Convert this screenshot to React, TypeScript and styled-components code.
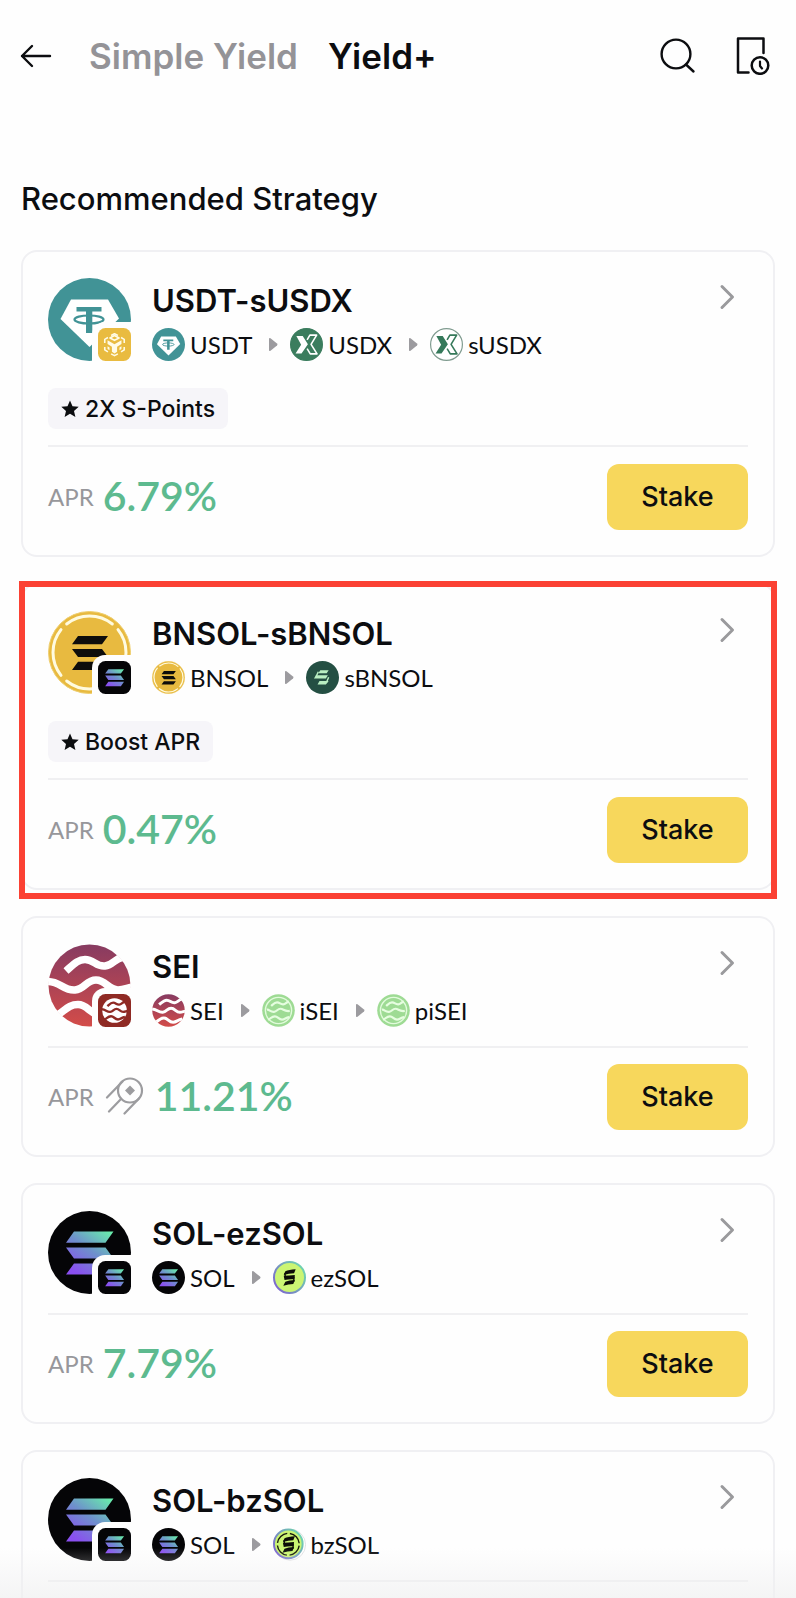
import React, { useId } from 'react';
import styled, { createGlobalStyle } from 'styled-components';

const GlobalStyle = createGlobalStyle`
  *, *::before, *::after { box-sizing: border-box; }
  html, body { margin: 0; background: #fefefe; }
  button { margin: 0; padding: 0; border: 0; background: none; color: inherit; font: inherit; cursor: pointer; }
`;

const HEADING_FONT = "Inter, 'Open Sans', sans-serif";
const TEXT_FONT = "Lato, 'Open Sans', sans-serif";

/* ---------- layout ---------- */

const Screen = styled.div`
  position: relative;
  height: 100vh;
  overflow: hidden;
  display: flex;
  flex-direction: column;
  background: #fefefe;
  color: #0c0d10;
  font-family: ${TEXT_FONT};
`;

const TopBar = styled.header`
  flex: none;
  display: flex;
  align-items: center;
  height: 112px;
  padding: 0 26px 0 20px;
`;

const IconButton = styled.button`
  display: flex;
  flex: none;
`;

const Tabs = styled.nav`
  flex: 1;
  display: flex;
  gap: 30px;
  margin-left: 37px;
`;

const Tab = styled.button<{ $active?: boolean }>`
  font-family: ${HEADING_FONT};
  font-size: 35px;
  line-height: 44px;
  font-weight: 600;
  white-space: nowrap;
  color: ${(p) => (p.$active ? '#0c0d10' : '#949397')};
`;

const Actions = styled.div`
  display: flex;
  align-items: center;
  gap: 40px;
`;

const Content = styled.main`
  flex: 1;
  min-height: 0;
  overflow-y: auto;
  scrollbar-width: none;
  padding: 67px 21px 0;
`;

const SectionTitle = styled.h1`
  margin: 0 0 31px;
  font-family: ${HEADING_FONT};
  font-size: 31px;
  line-height: 40px;
  font-weight: 500;
`;

const CardList = styled.div`
  display: flex;
  flex-direction: column;
  gap: 26px;
`;

const Card = styled.article`
  position: relative;
  padding: 26px 25px 25px;
  border: 2px solid #f0f0f3;
  border-radius: 16px;
`;

const Highlight = styled.div`
  position: absolute;
  inset: -4px -4px -11px;
  border: 6px solid #fb4133;
  pointer-events: none;
`;

const CardHead = styled.div`
  display: flex;
  align-items: flex-start;
`;

const AssetMark = styled.div`
  position: relative;
  flex: none;
  display: flex;
  width: 83px;
  height: 83px;
  overflow: hidden;
`;

const NetworkBadge = styled.div`
  position: absolute;
  right: 0;
  bottom: 0;
  display: flex;
  padding: 6px 0 0 6px;
  border-radius: 13px 0 0 0;
  background: #fefefe;
`;

const CardInfo = styled.div`
  flex: 1;
  min-width: 0;
  margin-left: 21px;
`;

const CardTitle = styled.h2`
  margin: 0 0 4px;
  font-family: ${HEADING_FONT};
  font-size: 31px;
  line-height: 46px;
  font-weight: 600;
`;

const Route = styled.div`
  display: flex;
  align-items: center;
  height: 33px;
`;

const Token = styled.span`
  display: flex;
  align-items: center;
  gap: 5px;
  font-size: 24px;
  line-height: 32px;
  white-space: nowrap;
`;

const StepArrow = styled.svg`
  flex: none;
  margin: 0 12px 0 16px;
`;

const OpenButton = styled(IconButton)`
  margin: 5px 12px 0 0;
`;

const TagRow = styled.div`
  display: flex;
  margin-top: 27px;
`;

const Tag = styled.span`
  display: flex;
  align-items: center;
  gap: 6px;
  height: 41px;
  padding: 0 13px;
  border-radius: 8px;
  background: #f6f5f9;
  font-family: ${HEADING_FONT};
  font-size: 23px;
  font-weight: 500;
  white-space: nowrap;
`;

const CardFoot = styled.div<{ $tagged?: boolean }>`
  display: flex;
  align-items: center;
  justify-content: space-between;
  margin-top: ${(p) => (p.$tagged ? 16 : 19)}px;
  padding-top: ${(p) => (p.$tagged ? 17 : 16)}px;
  border-top: 2px solid #f0f0f2;
`;

const Rate = styled.div`
  display: flex;
  align-items: center;
  gap: 9px;
  padding-bottom: 2px;
`;

const RateLabel = styled.span`
  font-size: 24px;
  color: #97979b;
`;

const RateValue = styled.span`
  font-size: 41px;
  line-height: 48px;
  font-weight: 600;
  color: #5dba8f;
`;

const StakeButton = styled.button`
  width: 141px;
  height: 66px;
  margin-left: auto;
  padding-bottom: 2px;
  border-radius: 12px;
  background: #f7d75c;
  font-family: ${HEADING_FONT};
  font-size: 27px;
  font-weight: 500;
  color: #0c0d10;
`;

const BottomFade = styled.div`
  position: absolute;
  left: 0;
  right: 0;
  bottom: 0;
  height: 50px;
  background: linear-gradient(rgba(240, 240, 241, 0), rgba(240, 240, 241, 0.7));
  pointer-events: none;
`;

/* ---------- interface icons ---------- */

const BackIcon = () => (
  <svg width="32" height="24" viewBox="0 0 32 24" fill="none" stroke="#0c0d10" strokeWidth="2.4" strokeLinecap="round" strokeLinejoin="round">
    <path d="M12 2 2 12 12 22M2 12H30" />
  </svg>
);

const SearchIcon = () => (
  <svg width="36" height="38" viewBox="0 0 36 38" fill="none" stroke="#0c0d10" strokeWidth="2.4" strokeLinecap="round">
    <circle cx="16" cy="17" r="14.4" />
    <path d="M26 27.500 33.500 34.500" />
  </svg>
);

const HistoryIcon = () => (
  <svg width="34" height="38" viewBox="0 0 34 38" fill="none" stroke="#0c0d10" strokeWidth="2.5" strokeLinecap="round" strokeLinejoin="round">
    <path d="M12.500 35.500H2V1.500H27.500V16" />
    <circle cx="24" cy="28.500" r="8.300" />
    <path d="M24 24.500V29L26 31.500" strokeWidth="2.200" />
  </svg>
);

const ChevronIcon = () => (
  <svg width="17" height="28" viewBox="0 0 17 28" fill="none" stroke="#9a9a9d" strokeWidth="3" strokeLinecap="round" strokeLinejoin="round">
    <path d="M3 3.500 13.500 14 3 24.500" />
  </svg>
);

const Arrow = () => (
  <StepArrow width="10" height="15" viewBox="0 0 10 15" aria-hidden="true">
    <path d="M1 2Q1 0.500 2.500 1.300L9 6.500Q10 7.500 9 8.500L2.500 13.700Q1 14.500 1 13Z" fill="#9c9b9f" />
  </StepArrow>
);

const StarIcon = () => (
  <svg width="18" height="18" viewBox="0 0 18 18" aria-hidden="true">
    <path d="M9 0.500 11.500 6.200 17.700 6.800 13 10.900 14.400 17 9 13.800 3.600 17 5 10.900 0.300 6.800 6.500 6.200Z" fill="#0c0d10" />
  </svg>
);

const CometIcon = () => (
  <svg width="43" height="38" viewBox="-2 0 43 38" fill="none" stroke="#9c9c9f" strokeWidth="2.200" strokeLinecap="round" aria-hidden="true">
    <circle cx="25" cy="13.500" r="12" />
    <path d="M25 8.500 30 13.500 25 18.500 20 13.500Z" fill="#9c9c9f" stroke="none" />
    <path d="M17.500 4.500 2 20.500M16 22 4 34.500M34 21.500 19.500 36.500" />
  </svg>
);

/* ---------- token marks, all drawn on an 83-unit square ---------- */

type MarkProps = { size: number };

const Mark = ({ size, children }: MarkProps & { children: React.ReactNode }) => (
  <svg width={size} height={size} viewBox="0 0 83 83" aria-hidden="true">
    {children}
  </svg>
);

const UsdtMark = ({ size }: MarkProps) => (
  <Mark size={size}>
    <circle cx="41.5" cy="41.5" r="41.500" fill="#419396" />
    <path d="M23 21.500H60L71 40.500 41.500 69 12.500 41Z" fill="#fff" />
    <path d="M28.500 29H53.500V33.500H44.300V55H38V33.500H28.500Z" fill="#419396" />
    <ellipse cx="41" cy="41.500" rx="14.500" ry="4" fill="none" stroke="#419396" strokeWidth="2.200" />
  </Mark>
);

const BARS = 'M26 20.500H65.500L57.500 31.700H18ZM18 36.500H57.500L65.500 47.600H26ZM26 52.500H65.500L57.500 63.500H18Z';

const SolMark = ({ size, square }: MarkProps & { square?: boolean }) => {
  const id = useId();
  return (
    <Mark size={size}>
      <linearGradient id={id} gradientUnits="userSpaceOnUse" x1="24" y1="66" x2="58" y2="18">
        <stop offset="0.100" stopColor="#8a4ff0" />
        <stop offset="0.550" stopColor="#6e90cc" />
        <stop offset="1" stopColor="#68ecab" />
      </linearGradient>
      {square ? <rect width="83" height="83" rx="19" fill="#050507" /> : <circle cx="41.500" cy="41.500" r="41.500" fill="#050507" />}
      <path d={BARS} fill={`url(#${id})`} />
    </Mark>
  );
};

const BnsolMark = ({ size }: MarkProps) => (
  <Mark size={size}>
    <circle cx="41.500" cy="41.500" r="41" fill="#e8ba40" stroke="#efcf70" />
    <circle cx="41.500" cy="41.500" r="36.500" fill="none" stroke="#fffbe0" strokeWidth="3" strokeLinecap="round" pathLength="400" strokeDasharray="86 14" strokeDashoffset="-57" />
    <path d="M30 25H60L54 33.300H24ZM24 38H54L60 46H30ZM30 50.700H60L54 59H24Z" fill="#0e0d0b" />
  </Mark>
);

const SbnsolMark = ({ size }: MarkProps) => (
  <Mark size={size}>
    <circle cx="41.500" cy="41.500" r="41.500" fill="#244f43" />
    <path d="M36 23H57L52 31H31ZM25 36H55L50 44H20ZM34 50H57L50 59H29Z" fill="#b9efc2" />
    <path d="M25 40 31 27M57 41 51 55" stroke="#b9efc2" strokeWidth="3.500" />
  </Mark>
);

const UsdxMark = ({ size, outlined }: MarkProps & { outlined?: boolean }) => {
  const ink = outlined ? '#35795a' : '#fff';
  return (
    <Mark size={size}>
      <circle cx="41.500" cy="41.500" r="40" fill={outlined ? '#fff' : '#3b7d5e'} stroke={outlined ? '#7f9b8f' : '#3b7d5e'} strokeWidth="3" />
      <path d="M16 20H32L45 41 29 64H14L28 42Z" fill={ink} />
      <path d="M43 30 50 18H67L53 41 68 65H51L43 52" fill="none" stroke={ink} strokeWidth="4" strokeLinejoin="round" />
    </Mark>
  );
};

const WAVES = [
  'M18 27C26 20 30 15.500 37 15.500C46 15.500 48 23 57 22C65 21 66 15 75 13',
  'M-2 37.500C12 36.500 15 47 27 46C37 45 38 36 48 36C58 36 60 46 70 46C76 46 79 44 85 43',
  'M8 72C17 67 20 60.500 30 60.500C40 60.500 42 71 53 71C62 71 64 65 76 63',
];

const SeiMark = ({ size }: MarkProps) => {
  const id = useId();
  return (
    <Mark size={size}>
      <linearGradient id={id} x1="0" y1="0" x2="0" y2="1">
        <stop offset="0" stopColor="#873b61" />
        <stop offset="1" stopColor="#d34c49" />
      </linearGradient>
      <clipPath id={`${id}c`}>
        <circle cx="41.500" cy="41.500" r="41.500" />
      </clipPath>
      <circle cx="41.500" cy="41.500" r="41" fill={`url(#${id})`} />
      <g fill="none" stroke="#fff" strokeWidth="7.500" clipPath={`url(#${id}c)`}>
        {WAVES.map((d) => <path key={d} d={d} />)}
      </g>
    </Mark>
  );
};

const SeiBadge = ({ size }: MarkProps) => (
  <Mark size={size}>
    <rect width="83" height="83" rx="19" fill="#8f2a24" />
    <circle cx="41.500" cy="41.500" r="31" fill="#fff" />
    <g transform="translate(10 10) scale(0.76)" fill="none" stroke="#8f2a24" strokeWidth="8">
      {WAVES.map((d) => <path key={d} d={d} />)}
    </g>
  </Mark>
);

const GreenSeiMark = ({ size }: MarkProps) => (
  <Mark size={size}>
    <circle cx="41.500" cy="41.500" r="41" fill="#9edb94" />
    <circle cx="41.500" cy="41.500" r="33" fill="none" stroke="#e2fbdc" strokeWidth="3.500" />
    <g transform="translate(9 9) scale(0.78)" fill="none" stroke="#e6fde0" strokeWidth="7">
      <path d={WAVES[0]} />
      <path d="M4 39C12 37 15 47 27 46C37 45 38 36 48 36C58 36 60 46 78 43" />
      <path d={WAVES[2]} />
    </g>
  </Mark>
);

const BnbBadge = ({ size }: MarkProps) => (
  <Mark size={size}>
    <rect width="83" height="83" rx="19" fill="#e9bb40" />
    <g fill="none" stroke="#fffbe6" strokeWidth="4" strokeLinejoin="round">
      <path d="M33 19 41.500 14.500 50 19M58 24 66 28.500V38M66 48V55L58 60M50 65 41.500 69.500 33 65M25 60 17 55V48M17 38V28.500L25 24" />
      <path d="M30 25 41.500 31 53 25 41.500 19Z" />
    </g>
    <path d="M24 31 41.500 41 59 31V40L48 47V60L41.500 64 35 60V47L24 40ZM24 46 29 49V56L24 53ZM59 46 54 49V56L59 53Z" fill="#fffbe6" />
  </Mark>
);

const LimeMark = ({ size, ringed }: MarkProps & { ringed?: boolean }) => {
  const id = useId();
  return (
    <Mark size={size}>
      <linearGradient id={id} x1="0" y1="0.900" x2="1" y2="0.200">
        <stop offset="0" stopColor="#7e5fd0" />
        <stop offset="1" stopColor="#6ed8ae" />
      </linearGradient>
      {ringed && <circle cx="43" cy="42" r="39" fill="#fff" stroke="#d9d9dc" strokeWidth="2" />}
      <circle cx={ringed ? 38.500 : 41.500} cy={ringed ? 40 : 41.500} r={ringed ? 36 : 39} fill="#cbf573" stroke={`url(#${id})`} strokeWidth="5" />
      {ringed && <circle cx="38.500" cy="41" r="27.500" fill="none" stroke="#17190c" strokeWidth="3.500" pathLength="400" strokeDasharray="84 16" strokeDashoffset="-8" />}
      <g transform={ringed ? 'translate(-2 0)' : undefined}>
        <path d="M31 26Q40 22 57 21L53 31Q40 31 27 35ZM27 37Q41 36 55 35L53 46Q41 45 29 48ZM31 52Q40 48 55 48L51 58Q39 58 26 62Z" fill="#0c0d08" />
        <path d="M30 30 31 42M53 39 52 53" stroke="#0c0d08" strokeWidth="3.500" />
      </g>
    </Mark>
  );
};

/* ---------- data ---------- */

type Strategy = {
  name: string;
  mark: React.ReactNode;
  badge: React.ReactNode;
  route: { label: string; icon: React.ReactNode }[];
  tag?: string;
  apr?: string;
  boosted?: boolean;
  highlighted?: boolean;
};

const BIG = 83;
const SMALL = 33;

const strategies: Strategy[] = [
  {
    name: 'USDT-sUSDX',
    mark: <UsdtMark size={BIG} />,
    badge: <BnbBadge size={SMALL} />,
    route: [
      { label: 'USDT', icon: <UsdtMark size={SMALL} /> },
      { label: 'USDX', icon: <UsdxMark size={SMALL} /> },
      { label: 'sUSDX', icon: <UsdxMark size={SMALL} outlined /> },
    ],
    tag: '2X S-Points',
    apr: '6.79%',
  },
  {
    name: 'BNSOL-sBNSOL',
    mark: <BnsolMark size={BIG} />,
    badge: <SolMark size={SMALL} square />,
    route: [
      { label: 'BNSOL', icon: <BnsolMark size={SMALL} /> },
      { label: 'sBNSOL', icon: <SbnsolMark size={SMALL} /> },
    ],
    tag: 'Boost APR',
    apr: '0.47%',
    highlighted: true,
  },
  {
    name: 'SEI',
    mark: <SeiMark size={BIG} />,
    badge: <SeiBadge size={SMALL} />,
    route: [
      { label: 'SEI', icon: <SeiMark size={SMALL} /> },
      { label: 'iSEI', icon: <GreenSeiMark size={SMALL} /> },
      { label: 'piSEI', icon: <GreenSeiMark size={SMALL} /> },
    ],
    apr: '11.21%',
    boosted: true,
  },
  {
    name: 'SOL-ezSOL',
    mark: <SolMark size={BIG} />,
    badge: <SolMark size={SMALL} square />,
    route: [
      { label: 'SOL', icon: <SolMark size={SMALL} /> },
      { label: 'ezSOL', icon: <LimeMark size={SMALL} /> },
    ],
    apr: '7.79%',
  },
  {
    name: 'SOL-bzSOL',
    mark: <SolMark size={BIG} />,
    badge: <SolMark size={SMALL} square />,
    route: [
      { label: 'SOL', icon: <SolMark size={SMALL} /> },
      { label: 'bzSOL', icon: <LimeMark size={SMALL} ringed /> },
    ],
  },
];

const StrategyCard = ({ item }: { item: Strategy }) => (
  <Card>
    <CardHead>
      <AssetMark>
        {item.mark}
        <NetworkBadge>{item.badge}</NetworkBadge>
      </AssetMark>
      <CardInfo>
        <CardTitle>{item.name}</CardTitle>
        <Route>
          {item.route.map((step, i) => (
            <React.Fragment key={step.label}>
              {i > 0 && <Arrow />}
              <Token>
                {step.icon}
                {step.label}
              </Token>
            </React.Fragment>
          ))}
        </Route>
      </CardInfo>
      <OpenButton type="button" aria-label={`Open ${item.name}`}>
        <ChevronIcon />
      </OpenButton>
    </CardHead>
    {item.tag && (
      <TagRow>
        <Tag>
          <StarIcon />
          {item.tag}
        </Tag>
      </TagRow>
    )}
    <CardFoot $tagged={Boolean(item.tag)}>
      {item.apr && (
        <Rate>
          <RateLabel>APR</RateLabel>
          {item.boosted && <CometIcon />}
          <RateValue>{item.apr}</RateValue>
        </Rate>
      )}
      <StakeButton type="button">Stake</StakeButton>
    </CardFoot>
    {item.highlighted && <Highlight />}
  </Card>
);

export default function App() {
  return (
    <Screen>
      <GlobalStyle />
      <TopBar>
        <IconButton type="button" aria-label="Back">
          <BackIcon />
        </IconButton>
        <Tabs>
          <Tab type="button">Simple Yield</Tab>
          <Tab type="button" $active aria-current="page">Yield+</Tab>
        </Tabs>
        <Actions>
          <IconButton type="button" aria-label="Search">
            <SearchIcon />
          </IconButton>
          <IconButton type="button" aria-label="History">
            <HistoryIcon />
          </IconButton>
        </Actions>
      </TopBar>
      <Content>
        <SectionTitle>Recommended Strategy</SectionTitle>
        <CardList>
          {strategies.map((item) => (
            <StrategyCard key={item.name} item={item} />
          ))}
        </CardList>
      </Content>
      <BottomFade />
    </Screen>
  );
}
